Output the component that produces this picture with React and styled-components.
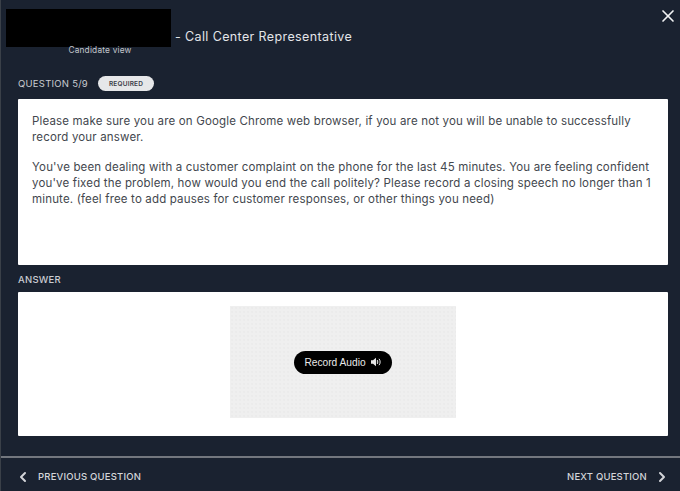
import React from "react";
import styled, { createGlobalStyle } from "styled-components";
import { ChevronLeft, ChevronRight, X } from "lucide-react";

const GlobalStyle = createGlobalStyle`
  html, body {
    margin: 0;
    padding: 0;
    background: #1a2230;
  }
  * {
    box-sizing: border-box;
  }
`;

const Page = styled.div`
  width: 680px;
  height: 491px;
  overflow: hidden;
  background: #1a2230;
  border-left: 1px solid #3a4048;
  font-family: Inter, "Open Sans", sans-serif;
  color: #d8dade;
  display: flex;
  flex-direction: column;
`;

const Header = styled.div`
  height: 64px;
  padding: 9px 2px 0 5px;
  display: flex;
  justify-content: space-between;
  align-items: flex-start;
`;

const HeaderLeft = styled.div`
  display: flex;
  align-items: flex-start;
`;

const Brand = styled.div`
  display: flex;
  flex-direction: column;
  align-items: center;
  width: 190px;
  margin-right: 4px;
`;

const LogoBlock = styled.div`
  width: 165px;
  height: 38px;
  background: #000;
  align-self: flex-start;
`;

const CandidateView = styled.div`
  font-size: 8.3px;
  line-height: 10px;
  letter-spacing: 0.2px;
  color: #c3c6cb;
  text-align: center;
  margin: -2px 0 0 -2px;
`;

const Title = styled.div`
  font-size: 12.5px;
  line-height: 16px;
  letter-spacing: 0.38px;
  margin: 20px 0 0 -25px;
  color: #e3e5e8;
`;

const Close = styled.button`
  border: none;
  background: none;
  padding: 0;
  color: #f2f3f4;
  display: flex;
  margin-top: -3px;
`;

const Content = styled.div`
  flex: 1;
  padding: 0 11px 0 17px;
  display: flex;
  flex-direction: column;
`;

const QuestionRow = styled.div`
  height: 35px;
  padding-top: 12px;
  display: flex;
  align-items: flex-start;
  gap: 10px;
`;

const Label = styled.div`
  font-size: 9.5px;
  line-height: 16px;
  letter-spacing: 0.25px;
  color: #c9ccd1;
`;

const Badge = styled.span`
  width: 56px;
  height: 15px;
  border-radius: 8px;
  background: #e6e7e9;
  color: #3b4048;
  font-size: 6.5px;
  font-weight: 600;
  letter-spacing: 0.2px;
  display: flex;
  align-items: center;
  justify-content: center;
`;

const Card = styled.div`
  width: 650px;
  height: ${(p) => p.$height}px;
  background: #fff;
  border-radius: 1px;
`;

const QuestionCard = styled(Card)`
  padding: 14px 14px;
  color: #43474e;
  font-size: 11.5px;
  line-height: 16px;
  letter-spacing: 0.165px;
`;

const Paragraph = styled.p`
  margin: 0 0 14px;
`;

const AnswerLabel = styled(Label)`
  height: 27px;
  padding-top: 7px;
  font-weight: 500;
`;

const AnswerCard = styled(Card)`
  padding-top: 14px;
  display: flex;
  justify-content: center;
  align-items: flex-start;
`;

const Recorder = styled.div`
  width: 226px;
  height: 112px;
  background-color: #efefef;
  background-image: radial-gradient(#e7e7e7 0.6px, transparent 0.8px);
  background-size: 4px 4px;
  display: flex;
  align-items: center;
  justify-content: center;
`;

const RecordButton = styled.button`
  width: 98px;
  height: 23px;
  border: none;
  border-radius: 12px;
  background: #000;
  color: #e8e8e8;
  font-family: "Liberation Sans", Arial, sans-serif;
  font-size: 10.2px;
  display: flex;
  align-items: center;
  justify-content: center;
  gap: 5px;
  padding: 0;
`;

const Footer = styled.div`
  height: 35px;
  border-top: 2px solid #73777e;
  padding: 4px 10px 0 14px;
  display: flex;
  align-items: center;
  justify-content: space-between;
`;

const NavButton = styled.button`
  border: none;
  background: none;
  padding: 0;
  color: #d3d5d9;
  font-family: Inter, "Open Sans", sans-serif;
  font-size: 9.5px;
  font-weight: 500;
  letter-spacing: 0.2px;
  display: flex;
  align-items: center;
  gap: 7px;
`;

const FooterSpacer = styled.div`
  height: 19px;
`;

const SpeakerIcon = () => (
  <svg width="11" height="10" viewBox="0 0 11 10" fill="currentColor">
    <path d="M0 3.2h2L5 .8v8.4L2 6.8H0z" />
    <path d="M6.3 3c.7.5.7 3.500 0 4z" stroke="currentColor" strokeWidth="0.8" fill="none" />
    <path d="M8 1.800c1.500 1.400 1.500 5 0 6.400" stroke="currentColor" strokeWidth="1" fill="none" />
  </svg>
);

export default function App() {
  return (
    <Page>
      <GlobalStyle />
      <Header>
        <HeaderLeft>
          <Brand>
            <LogoBlock />
            <CandidateView>Candidate view</CandidateView>
          </Brand>
          <Title>- Call Center Representative</Title>
        </HeaderLeft>
        <Close>
          <X size={20} strokeWidth={2} />
        </Close>
      </Header>
      <Content>
        <QuestionRow>
          <Label>QUESTION 5/9</Label>
          <Badge>REQUIRED</Badge>
        </QuestionRow>
        <QuestionCard $height={166}>
          <Paragraph>
            Please make sure you are on Google Chrome web browser, if you are not you will be unable to successfully record your answer.
          </Paragraph>
          <Paragraph>
            You've been dealing with a customer complaint on the phone for the last 45 minutes. You are feeling confident you've fixed the problem, how would you end the call politely? Please record a closing speech no longer than 1 minute. (feel free to add pauses for customer responses, or other things you need)
          </Paragraph>
        </QuestionCard>
        <AnswerLabel>ANSWER</AnswerLabel>
        <AnswerCard $height={144}>
          <Recorder>
            <RecordButton>
              Record Audio
              <SpeakerIcon />
            </RecordButton>
          </Recorder>
        </AnswerCard>
        <FooterSpacer />
      </Content>
      <Footer>
        <NavButton>
          <ChevronLeft size={16} strokeWidth={3} />
          PREVIOUS QUESTION
        </NavButton>
        <NavButton>
          NEXT QUESTION
          <ChevronRight size={16} strokeWidth={3} />
        </NavButton>
      </Footer>
    </Page>
  );
}
